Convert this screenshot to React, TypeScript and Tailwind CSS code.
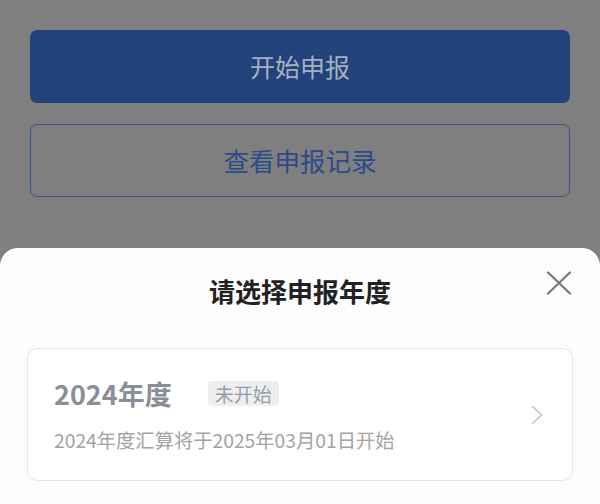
import React from 'react';

const font = { fontFamily: '"Noto Sans CJK SC", "Noto Sans", sans-serif' };

export default function App() {
  return (
    <div
      className="w-[600px] h-[504px] bg-[#7f7f7f] flex flex-col overflow-hidden"
      style={font}
    >
      {/* Dimmed page behind the sheet */}
      <div className="px-[30px] pt-[30px] flex flex-col gap-[21px]">
        <button
          type="button"
          className="h-[73px] w-full rounded-[7px] bg-[#22427b] text-[#a7b0c0] text-[25px] flex items-center justify-center"
        >
          开始申报
        </button>
        <button
          type="button"
          className="h-[73px] w-full rounded-[7px] border border-[#39548b] text-[#2b4a86] text-[25.5px] flex items-center justify-center"
        >
          查看申报记录
        </button>
      </div>

      {/* Bottom sheet */}
      <div className="mt-auto h-[256px] bg-[#fdfdfd] rounded-t-[18px] flex flex-col">
        <div className="relative h-[86px] flex items-center justify-center">
          <span className="text-[26px] font-bold text-[#222] leading-none">请选择申报年度</span>
          <button type="button" className="absolute right-[28px] top-[23px] w-[26px] h-[24px] text-[#777]">
            <svg viewBox="0 0 26 24" className="w-full h-full" fill="none" stroke="currentColor" strokeWidth="2.2" strokeLinecap="round">
              <path d="M2 1.5 L24 22.5 M24 1.5 L2 22.5" />
            </svg>
          </button>
        </div>

        <div className="mt-[14px] mx-[27px] h-[133px] rounded-[10px] border border-[#e6e6e6] bg-white flex items-center justify-between pl-[26px] pr-[29px]">
          <div className="flex flex-col pt-[2px]">
            <div className="flex items-center h-[28px]">
              <span className="text-[27px] font-bold text-[#8b8e97] leading-none">2024年度</span>
              <span className="ml-[36px] h-[25px] px-[7px] rounded-[4px] bg-[#eceef2] text-[#9a9ca3] text-[19px] leading-none flex items-center">
                未开始
              </span>
            </div>
            <span className="mt-[21px] text-[19.3px] leading-[24px] text-[#a3a3a3]">
              2024年度汇算将于2025年03月01日开始
            </span>
          </div>
          <svg viewBox="0 0 12 20" className="w-[12px] h-[20px] text-[#c2c2c2]" fill="none" stroke="currentColor" strokeWidth="1.5" strokeLinecap="round" strokeLinejoin="round">
            <path d="M1.5 1.5 L10.5 10 L1.5 18.5" />
          </svg>
        </div>
      </div>
    </div>
  );
}
